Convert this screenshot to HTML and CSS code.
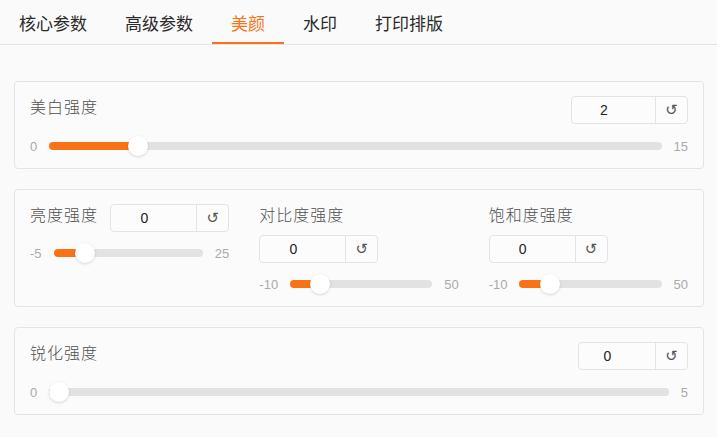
FILE: index.html
```html
<!DOCTYPE html>
<html lang="en">
<head>
    <meta charset="UTF-8">
    <meta name="viewport" content="width=device-width, initial-scale=1.0">
    <title>美颜</title>
    <link rel="stylesheet" href="styles.css">
</head>
<body>
    <!-- tabs -->
    <div class="tabs">
        <button class="tab">核心参数</button>
        <button class="tab">高级参数</button>
        <button class="tab active">美颜</button>
        <button class="tab">水印</button>
        <button class="tab">打印排版</button>
    </div>

    <div class="content">
        <!-- whitening -->
        <div class="panel">
            <div class="slider">
                <div class="head">
                    <span class="label">美白强度</span>
                    <div class="num wide">
                        <input type="number" value="2">
                        <button class="reset">↺</button>
                    </div>
                </div>
                <div class="range-row">
                    <span class="mm">0</span>
                    <input type="range" min="0" max="15" value="2" style="--p: 0.1333">
                    <span class="mm">15</span>
                </div>
            </div>
        </div>

        <!-- brightness / contrast / saturation -->
        <div class="panel cols">
            <div class="slider">
                <div class="head">
                    <span class="label">亮度强度</span>
                    <div class="num">
                        <input type="number" value="0">
                        <button class="reset">↺</button>
                    </div>
                </div>
                <div class="range-row">
                    <span class="mm">-5</span>
                    <input type="range" min="-5" max="25" value="0" style="--p: 0.1667">
                    <span class="mm">25</span>
                </div>
            </div>
            <div class="slider">
                <div class="head">
                    <span class="label">对比度强度</span>
                    <div class="num">
                        <input type="number" value="0">
                        <button class="reset">↺</button>
                    </div>
                </div>
                <div class="range-row">
                    <span class="mm">-10</span>
                    <input type="range" min="-10" max="50" value="0" style="--p: 0.1667">
                    <span class="mm">50</span>
                </div>
            </div>
            <div class="slider">
                <div class="head">
                    <span class="label">饱和度强度</span>
                    <div class="num">
                        <input type="number" value="0">
                        <button class="reset">↺</button>
                    </div>
                </div>
                <div class="range-row">
                    <span class="mm">-10</span>
                    <input type="range" min="-10" max="50" value="0" style="--p: 0.1667">
                    <span class="mm">50</span>
                </div>
            </div>
        </div>

        <!-- sharpen -->
        <div class="panel">
            <div class="slider">
                <div class="head">
                    <span class="label">锐化强度</span>
                    <div class="num narrow">
                        <input type="number" value="0">
                        <button class="reset">↺</button>
                    </div>
                </div>
                <div class="range-row">
                    <span class="mm">0</span>
                    <input type="range" min="0" max="5" value="0" style="--p: 0">
                    <span class="mm">5</span>
                </div>
            </div>
        </div>
    </div>
</body>
</html>
```

FILE: styles.css
```css
body {
    margin: 0;
    background: #fafafa;
    font-family: "Noto Sans CJK SC", "Liberation Sans", sans-serif;
    color: #333;
}

/* tabs */
.tabs {
    display: flex;
    height: 44px;
    border-bottom: 1px solid #e4e4e4;
}
.tab {
    height: 44px;
    padding: 2px 19px 0;
    border: none;
    border-bottom: 2px solid transparent;
    background: none;
    font-family: inherit;
    font-size: 17px;
    color: #2a2a2a;
}
.tab.active {
    color: #f97316;
    border-bottom-color: #f97316;
}

.content {
    padding: 36px 13px 20px 14px;
    display: flex;
    flex-direction: column;
    gap: 20px;
}
.panel {
    border: 1px solid #e4e4e4;
    border-radius: 4px;
    background: #fbfbfb;
    padding: 14px 15px 12px 15px;
}
.panel.cols {
    display: grid;
    grid-template-columns: 1fr 1fr 1fr;
    column-gap: 30px;
}
.panel.cols .slider {
    gap: 11px;
}

.slider {
    display: flex;
    flex-direction: column;
    gap: 12px;
}
.head {
    display: flex;
    flex-wrap: wrap;
    justify-content: space-between;
    align-items: flex-start;
    column-gap: 10px;
    row-gap: 11px;
}
.label {
    font-size: 16px;
    font-weight: 300;
    letter-spacing: 1px;
    line-height: 20px;
    color: #505050;
}

/* number box with reset */
.num {
    display: flex;
    height: 28px;
    border: 1px solid #e4e4e4;
    border-radius: 4px;
    background: #fcfcfc;
    box-sizing: border-box;
}
.num input {
    width: 85px;
    box-sizing: border-box;
    border: none;
    background: none;
    padding: 0 19px 0 0;
    text-align: center;
    font-family: "Liberation Sans", sans-serif;
    font-size: 14px;
    color: #222;
    outline: none;
    -moz-appearance: textfield;
}
.num input::-webkit-inner-spin-button,
.num input::-webkit-outer-spin-button {
    -webkit-appearance: none;
    margin: 0;
}
.num.wide input { width: 83px; }
.num.narrow input { width: 76px; }
.reset {
    width: 32px;
    border: none;
    border-left: 1px solid #e4e4e4;
    background: none;
    padding: 0 0 1px;
    font-family: "DejaVu Sans", sans-serif;
    font-size: 15px;
    color: #555;
}

/* range */
.range-row {
    display: flex;
    align-items: center;
    gap: 12px;
    height: 20px;
}
.mm {
    font-family: "Liberation Sans", sans-serif;
    font-size: 13px;
    color: #aaa;
}
.range-row input[type=range] {
    -webkit-appearance: none;
    appearance: none;
    flex: 1;
    min-width: 0;
    margin: 0;
    height: 20px;
    background: none;
}
.range-row input[type=range]::-webkit-slider-runnable-track {
    height: 8px;
    border-radius: 4px;
    background: linear-gradient(to right, #f97316 calc(10px + var(--p) * (100% - 20px)), #e2e2e2 0);
}
.range-row input[type=range]::-webkit-slider-thumb {
    -webkit-appearance: none;
    width: 20px;
    height: 20px;
    margin-top: -6px;
    border-radius: 50%;
    background: #fff;
    box-shadow: 0 1px 3px rgba(0,0,0,0.15);
}
```
